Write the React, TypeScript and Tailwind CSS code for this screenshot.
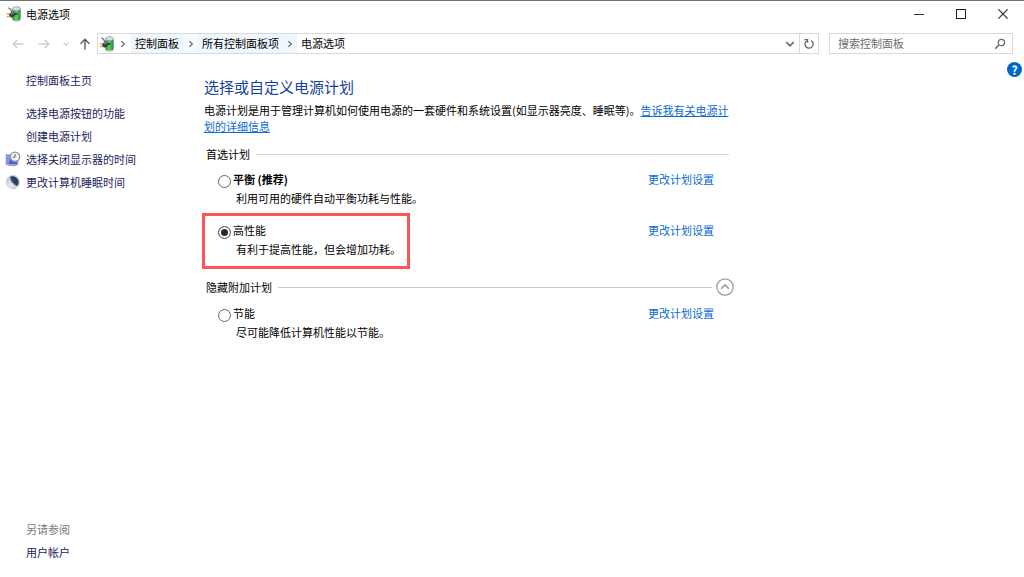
import { useState, type ReactNode } from "react";

function PowerIcon() {
  return (
    <svg viewBox="0 0 16 16" className="size-4 shrink-0" aria-hidden="true">
      <defs>
        <linearGradient id="cell" x1="0" x2="1">
          <stop offset="0" stopColor="#2f9a38" />
          <stop offset="0.5" stopColor="#55d455" />
          <stop offset="1" stopColor="#1f8a30" />
        </linearGradient>
      </defs>
      <rect x="6.4" y="1" width="8" height="14" rx="2.8" fill="url(#cell)" stroke="#7d8a86" strokeWidth="0.7" />
      <path d="M6.6 3.8C6.8 1.4 8.2.8 10.4.8s3.6.6 3.8 3c-1.6.8-6 .8-7.6 0z" fill="#dde0ee" stroke="#9a9fb4" strokeWidth="0.6" />
      <path d="M7 13.6c1.6.8 5.2.8 6.8 0-.4 1.2-1.4 1.6-3.400 1.600s-3-.4-3.400-1.600z" fill="#b4c2b8" />
      <path d="M2.4 1.800c1.600.2 2.600 2 3.600 4.200" fill="none" stroke="#6a6d73" strokeWidth="1.3" />
      <path d="M3.2 8c.8-1.600 2.800-2.200 4.600-1.400l3.800.600v1.200l-2.800.8c-.4 1.600-2.400 2.600-4.200 2C3.400 10.800 2.800 9.400 3.200 8z" fill="#3b3e43" />
      <path d="M4.600 8c.8-.8 2-1 3-.4" fill="none" stroke="#b4b8bd" strokeWidth="0.9" />
      <path d="M.6 8h2.800M.8 10.600h2.800" stroke="#d9ad32" strokeWidth="1.4" />
    </svg>
  );
}

function DisplayTimeIcon() {
  return (
    <svg viewBox="0 0 16 16" className="size-4" aria-hidden="true">
      <rect x="1.200" y="3.800" width="11.600" height="9.800" fill="#4a63e6" stroke="#9aa2bd" />
      <path d="M1.700 4.300h4.600l-2.800 8.800H1.700z" fill="#8298f4" />
      <path d="M3.500 14.600h8" stroke="#9a9aa2" />
      <circle cx="10" cy="5.800" r="4.700" fill="#eef3f4" stroke="#8b9196" strokeWidth="1.300" />
      <path d="M10 3V6.200H7.800" fill="none" stroke="#58626c" />
    </svg>
  );
}

function SleepIcon() {
  return (
    <svg viewBox="0 0 16 16" className="size-4" aria-hidden="true">
      <defs>
        <linearGradient id="moon" x1="0" x2="1" y1="0" y2="1">
          <stop offset="0" stopColor="#a9bed4" />
          <stop offset="0.500" stopColor="#e4eaee" />
          <stop offset="1" stopColor="#b9c6d2" />
        </linearGradient>
      </defs>
      <circle cx="8" cy="8" r="6.700" fill="url(#moon)" stroke="#b7c1cb" strokeWidth="0.600" />
      <path d="M5.400 2.800C9.200 1.200 13.600 4 13.600 8.200c0 1.600-.6 2.800-1.400 3.600C8.600 11.200 4.600 7.400 5.400 2.800z" fill="#2e3d58" />
      <path d="M5.400 2.800C4.600 7.400 8.600 11.200 12.200 11.800 9.400 10.200 6.600 6.800 5.400 2.800z" fill="#71869f" />
    </svg>
  );
}

function Chevron({ className = "" }: { className?: string }) {
  return (
    <svg viewBox="0 0 8 8" className={`size-2 shrink-0 ${className}`} aria-hidden="true">
      <path d="M2.4 1.2 5.4 4 2.4 6.8" fill="none" stroke="#6b6b6b" strokeWidth="1.2" />
    </svg>
  );
}

function Arrow({ path, label, tone, className }: { path: string; label: string; tone: string; className: string }) {
  return (
    <button type="button" aria-label={label} className={`flex items-center justify-center ${className}`}>
      <svg viewBox="0 0 12 12" className="size-3">
        <path d={path} fill="none" stroke={tone} strokeWidth="1.4" />
      </svg>
    </button>
  );
}

function TitleBar() {
  return (
    <header className="flex h-7 items-center border-t border-[#707070] pb-px pl-[6px]">
      <PowerIcon />
      <h1 className="ml-1 flex-1 pb-px text-black">电源选项</h1>
      <button type="button" aria-label="最小化" className="flex h-full w-[42px] items-center justify-center">
        <svg viewBox="0 0 10 10" className="size-[10px]">
          <path d="M0 5.5h10" stroke="#333" />
        </svg>
      </button>
      <button type="button" aria-label="最大化" className="flex h-full w-[42px] items-center justify-center">
        <svg viewBox="0 0 10 10" className="size-[10px]">
          <rect x="0.5" y="0.5" width="9" height="9" fill="none" stroke="#222" />
        </svg>
      </button>
      <button type="button" aria-label="关闭" className="flex h-full w-[42px] items-center justify-center">
        <svg viewBox="0 0 10 10" className="size-[10px]">
          <path d="M.4.4l9.2 9.2M9.6.4.4 9.6" stroke="#222" strokeWidth="1.1" />
        </svg>
      </button>
    </header>
  );
}

function NavBar() {
  return (
    <div className="flex h-[31px] items-center pr-[11px] pl-[6px]">
      <Arrow label="后退" tone="#cfcfcf" className="size-6" path="M11.5 6H1.5M5.5 1.8 1.2 6l4.3 4.2" />
      <Arrow label="前进" tone="#cfcfcf" className="ml-[2px] size-6" path="M.5 6h10M6.5 1.8 10.8 6l-4.3 4.2" />
      <Arrow label="最近浏览的位置" tone="#d2d2d2" className="h-6 w-5" path="M3.6 4.8 6 7.2l2.4-2.4" />
      <Arrow label="上移" tone="#5c5c5c" className="mr-[3px] h-6 w-[18px]" path="M6 11.6V1.4M1.6 5.8 6 1.2l4.4 4.6" />
      <nav aria-label="地址" className="flex h-[21px] min-w-0 flex-1 items-stretch border border-[#d9d9d9] text-black">
        <span className="flex items-center pl-px">
          <PowerIcon />
        </span>
        <Chevron className="mx-1 self-center" />
        <a href="#control" className="flex items-center bg-[#eff7fe] px-1 pb-[2px]">控制面板</a>
        <span className="flex w-[15px] items-center justify-center bg-[#f5fafe]">
          <Chevron />
        </span>
        <a href="#all" className="flex items-center bg-[#eff7fe] px-1 pb-[2px]">所有控制面板项</a>
        <span className="flex w-[14px] items-center justify-center bg-[#eff7fe]">
          <Chevron />
        </span>
        <a href="#power" className="flex items-center px-1 pb-[2px]">电源选项</a>
        <button type="button" aria-label="以前的位置" className="ml-auto flex w-[18px] items-center justify-center">
          <svg viewBox="0 0 10 10" className="size-[10px]">
            <path d="M1.2 3 5 6.8 8.8 3" fill="none" stroke="#666" strokeWidth="1.7" />
          </svg>
        </button>
        <button type="button" aria-label="刷新" className="flex w-[19px] items-center justify-center border-l border-[#d9d9d9]">
          <svg viewBox="0 0 12 12" className="size-3">
            <path d="M8.2 2.6A4.1 4.1 0 1 1 3.6 2.8M1.6 1.7h3v3" fill="none" stroke="#666" strokeWidth="1.3" />
          </svg>
        </button>
      </nav>
      <label className="ml-[10px] flex h-[21px] w-[184px] items-center border border-[#d9d9d9] pr-[6px] pl-2">
        <input
          type="text"
          aria-label="搜索控制面板"
          placeholder="搜索控制面板"
          className="min-w-0 flex-1 pb-[2px] outline-none placeholder:text-[#6d6d6d]"
        />
        <svg viewBox="0 0 12 12" className="size-3" aria-hidden="true">
          <circle cx="7.4" cy="4.5" r="3.2" fill="none" stroke="#666" strokeWidth="1.2" />
          <path d="M5 6.9 1.2 10.7" stroke="#666" strokeWidth="1.5" />
        </svg>
      </label>
    </div>
  );
}

function TaskLink({ href, icon, children }: { href: string; icon?: ReactNode; children: ReactNode }) {
  return (
    <li className="flex h-[23px] items-center">
      <span className="flex w-[21px] shrink-0">{icon}</span>
      <a href={href} className="text-[#1c1c5e]">{children}</a>
    </li>
  );
}

function Sidebar() {
  return (
    <aside className="flex w-[204px] shrink-0 flex-col pt-[9px] pb-[14px] pl-[5px]">
      <ul>
        <TaskLink href="#home">控制面板主页</TaskLink>
      </ul>
      <ul className="mt-[10px]">
        <TaskLink href="#buttons">选择电源按钮的功能</TaskLink>
        <TaskLink href="#create">创建电源计划</TaskLink>
        <TaskLink href="#display" icon={<DisplayTimeIcon />}>选择关闭显示器的时间</TaskLink>
        <TaskLink href="#sleep" icon={<SleepIcon />}>更改计算机睡眠时间</TaskLink>
      </ul>
      <h2 className="mt-auto flex h-[23px] items-center pl-[21px] text-[#7a7a7a]">另请参阅</h2>
      <ul>
        <TaskLink href="#accounts">用户帐户</TaskLink>
      </ul>
    </aside>
  );
}

type PlanProps = {
  id: string;
  name: string;
  description: string;
  selected: string;
  onSelect: (id: string) => void;
  bold?: boolean;
  marked?: boolean;
};

function Plan({ id, name, description, selected, onSelect, bold, marked }: PlanProps) {
  return (
    <div className="relative pl-[14px]">
      <div className="flex h-[19px] items-center">
        <input
          id={id}
          type="radio"
          name="plan"
          checked={selected === id}
          onChange={() => onSelect(id)}
          aria-describedby={`${id}-description`}
          className="mt-1 size-[13px] appearance-none rounded-full border border-[#666] bg-white checked:bg-[#2b2b2b] checked:shadow-[inset_0_0_0_2px_white]"
        />
        <label htmlFor={id} className={`ml-[2px] leading-[19px] ${bold ? "font-bold" : ""}`}>{name}</label>
        <a href={`#${id}`} className="mr-[15px] ml-auto leading-[19px] text-[#0b6bd0]">更改计划设置</a>
      </div>
      <p id={`${id}-description`} className="pl-[18px] leading-[19px]">{description}</p>
      {marked && (
        <span className="pointer-events-none absolute -top-2 -left-[2px] h-14 w-52 border-3 border-[#fe5457]" />
      )}
    </div>
  );
}

export default function App() {
  const [plan, setPlan] = useState("high");
  const [expanded, setExpanded] = useState(true);
  return (
    <div className="flex min-h-screen flex-col bg-white font-['Noto_Sans_CJK_SC',sans-serif] text-[11px] leading-4 text-black">
      <TitleBar />
      <NavBar />
      <div className="flex flex-1">
        <Sidebar />
        <main className="min-w-0 max-w-[525px] flex-1 pt-4">
          <h2 className="text-[15px] leading-6 text-[#15429b]">选择或自定义电源计划</h2>
          <p className="mt-[3px]">
            电源计划是用于管理计算机如何使用电源的一套硬件和系统设置(如显示器亮度、睡眠等)。
            <a href="#more" className="text-[#0b6bd0] underline">告诉我有关电源计划的详细信息</a>
          </p>
          <section className="mt-3">
            <div className="flex items-center pl-[2px]">
              <h3>首选计划</h3>
              <div className="ml-[6px] h-px flex-1 bg-[#d5d5d5]" />
            </div>
            <div className="mt-2 flex flex-col gap-[13px]">
              <Plan id="balanced" name="平衡 (推荐)" description="利用可用的硬件自动平衡功耗与性能。" bold selected={plan} onSelect={setPlan} />
              <Plan id="high" name="高性能" description="有利于提高性能，但会增加功耗。" marked selected={plan} onSelect={setPlan} />
            </div>
          </section>
          <section className="mt-[19px] pb-4">
            <div className="-mr-[5px] flex items-center pl-[2px]">
              <h3>隐藏附加计划</h3>
              <div className="ml-[6px] h-px flex-1 bg-[#c8c8c8]" />
              <button
                type="button"
                aria-label="隐藏附加计划"
                aria-expanded={expanded}
                onClick={() => setExpanded(!expanded)}
                className="ml-1"
              >
                <svg viewBox="0 0 18 18" className="size-[18px]">
                  <circle cx="9" cy="9" r="8.2" fill="none" stroke="#999" strokeWidth="1.2" />
                  <path d="M5.2 10.8 9 7l3.8 3.8" fill="none" stroke="#999" strokeWidth="1.6" />
                </svg>
              </button>
            </div>
            {expanded && (
              <div className="mt-2">
                <Plan id="saver" name="节能" description="尽可能降低计算机性能以节能。" selected={plan} onSelect={setPlan} />
              </div>
            )}
          </section>
        </main>
        <button type="button" aria-label="帮助" className="mt-[3px] mr-[2px] ml-auto size-[15px] shrink-0 self-start rounded-full bg-[#0067c5] text-[12px] leading-[15px] font-bold text-white">
          ?
        </button>
      </div>
    </div>
  );
}
